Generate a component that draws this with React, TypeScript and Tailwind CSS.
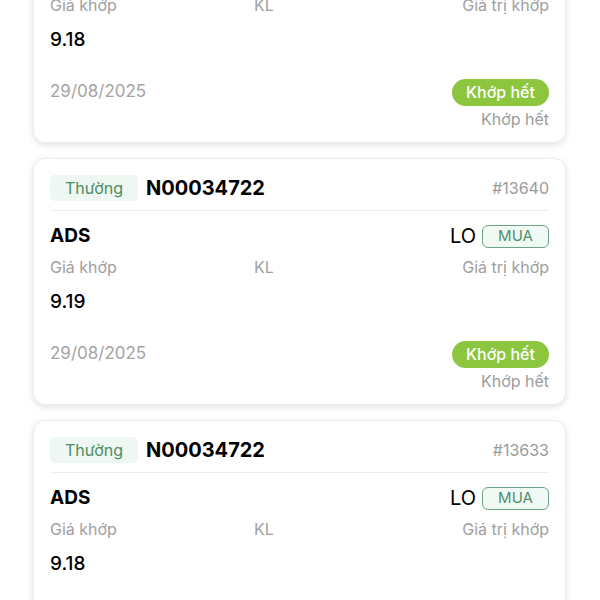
import React from "react";

type Order = {
  no: string;
  id: string;
  symbol: string;
  price: string;
  date: string;
};

const orders: Order[] = [
  { no: "N00034722", id: "#13641", symbol: "ADS", price: "9.18", date: "29/08/2025" },
  { no: "N00034722", id: "#13640", symbol: "ADS", price: "9.19", date: "29/08/2025" },
  { no: "N00034722", id: "#13633", symbol: "ADS", price: "9.18", date: "29/08/2025" },
];

const OrderCard = ({ order }: { order: Order }) => (
  <div className="h-[247px] shrink-0 rounded-[12px] border border-[#ececec] bg-white px-4 pt-[14px] shadow-[0_2px_6px_rgba(0,0,0,0.12)]">
    <div className="flex items-center">
      <span className="flex h-[26px] w-[88px] items-center justify-center rounded-[5px] bg-[#eef7f1] text-[16px] text-[#4b8d63]">
        Thường
      </span>
      <span className="ml-2 text-[20px] font-bold text-black">{order.no}</span>
      <span className="ml-auto text-[16px] text-[#9a9a9a]">{order.id}</span>
    </div>
    <div className="mt-[7px] h-px bg-[#ededed]" />
    <div className="mt-[13px] flex h-[24px] items-center">
      <span className="text-[19px] font-bold text-black">{order.symbol}</span>
      <span className="ml-auto text-[20px] text-black">LO</span>
      <span className="ml-[6px] flex h-[23px] w-[67px] items-center justify-center rounded-[6px] border border-[#6da386] bg-[#f1f9f4] text-[15px] text-[#4f8f6c]">
        MUA
      </span>
    </div>
    <div className="mt-[7px] grid h-[22px] grid-cols-[204px_1fr_auto] items-center text-[16px] text-[#a0a0a0]">
      <span>Giá khớp</span>
      <span>KL</span>
      <span>Giá trị khớp</span>
    </div>
    <div className="mt-[13px] h-[24px] text-[19px] font-medium leading-[24px] text-black">{order.price}</div>
    <div className="mt-[26px] flex h-[28px] items-center">
      <span className="text-[17px] text-[#a4a4a4]">{order.date}</span>
      <span className="ml-auto flex h-[27px] w-[97px] items-center justify-center rounded-full bg-[#8cc63f] text-[16px] font-medium text-white">
        Khớp hết
      </span>
    </div>
    <div className="mt-[2px] text-right text-[16px] leading-[22px] text-[#9c9c9c]">Khớp hết</div>
  </div>
);

const App = () => {
  return (
    <div
      className="h-[600px] w-[600px] overflow-hidden bg-white"
      style={{ fontFamily: "Inter, 'Noto Sans', sans-serif" }}
    >
      <div className="-mt-[104px] flex flex-col gap-[15px] pl-[33px] pr-[34px]">
        {orders.map((o) => (
          <OrderCard key={o.id} order={o} />
        ))}
      </div>
    </div>
  );
};

export default App;
